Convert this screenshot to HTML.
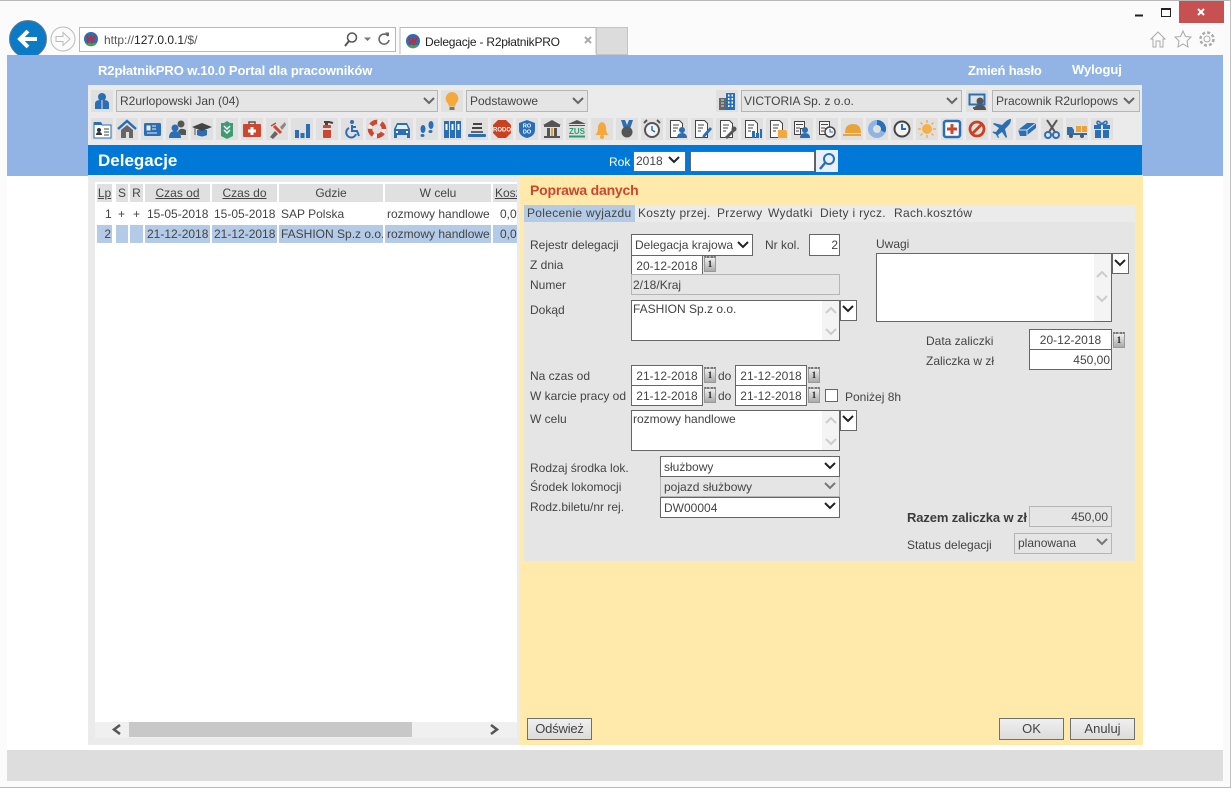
<!DOCTYPE html>
<html><head><meta charset="utf-8"><style>
html,body{margin:0;padding:0;width:1231px;height:788px;overflow:hidden;background:#fbfbfb}
body{font:12px/14px "Liberation Sans",sans-serif;letter-spacing:0;color:#444;position:relative}
div,span.a,svg.a{position:absolute;box-sizing:border-box}
.t{white-space:nowrap;line-height:14px;height:14px}
.w{color:#fff;font-weight:bold;font-size:13px;letter-spacing:-.08px}
.b{background:#fff;border:1px solid #666;padding:3px 3px 0;white-space:nowrap;line-height:15px;overflow:hidden}
.r{text-align:right;padding-right:1px}
.c{text-align:center}
.g{background:#e5e5e5;border:1px solid #b5b5b5;padding:3px 3px 0;white-space:nowrap;line-height:15px;overflow:hidden}
.h{background:#e0e0e0;top:184px;height:18px;text-align:center;line-height:18px;white-space:nowrap;overflow:hidden}
.u{text-decoration:underline}
.s{background:#b3cbe6;top:225px;height:18px;line-height:18px;white-space:nowrap;overflow:hidden}
.p{top:205px;line-height:17px;height:17px;white-space:nowrap;letter-spacing:.3px}
.bt{border:1px solid #707070;background:linear-gradient(#f0f0f0,#dcdcdc);text-align:center;top:718px;height:22px;line-height:20px;font-family:"Liberation Sans",sans-serif;font-size:13px;letter-spacing:0;color:#444}
.cal{width:12px;height:16px;background:linear-gradient(#eee,#aaa);border:1px solid #999;border-top:2px dotted #777;font:bold 9px/12px "Liberation Serif",serif;text-align:center;color:#222}
.sb{background:#f4f4f4;width:17px}
</style></head><body>
<!-- window frame -->
<div style="left:0;top:0;width:1231px;height:1px;background:#b8b8b8"></div>
<div style="left:1230px;top:0;width:1px;height:788px;background:#c0c0c0"></div>
<div style="left:0;top:787px;width:1231px;height:1px;background:#b8b8b8"></div>
<div style="left:1179px;top:1px;width:45px;height:22px;background:#c75050"></div>
<svg class="a" style="left:0;top:0" width="1231" height="55">
<path d="M1135 14.5h8v2h-8z" fill="#222"/>
<rect x="1161.5" y="8.5" width="9" height="8" fill="none" stroke="#222"/><rect x="1161" y="8" width="10" height="2" fill="#222"/>
<path d="M1198 9l6 6M1204 9l-6 6" stroke="#fff" stroke-width="2"/>
<circle cx="28" cy="39" r="18.500" fill="#0a7bc4" stroke="#6a7a88"/>
<path d="M37 39H21M28 31l-8 8 8 8" fill="none" stroke="#fff" stroke-width="4"/>
<circle cx="63" cy="39" r="12" fill="#fbfbfb" stroke="#bbb"/>
<path d="M56 36.500h7v-4l7 6.500-7 6.500v-4h-7z" fill="none" stroke="#bbb"/>
<rect x="79.500" y="27.500" width="316" height="24" fill="#fff" stroke="#b8b8b8"/>
<circle cx="91" cy="39" r="7" fill="#2a6fb5"/><path d="M85 43a7 7 0 0 0 12 0z" fill="#4aa04a"/><path d="M87 35l1 7 3-6 1 6 3-7" fill="none" stroke="#d22" stroke-width="1.600"/>
<circle cx="352" cy="37.500" r="4.500" fill="none" stroke="#555" stroke-width="1.500"/><path d="M349 41l-4 5" stroke="#555" stroke-width="2"/>
<path d="M364 37.500h7l-3.500 3.500z" fill="#777"/>
<path d="M388 36a5 5 0 1 0 1 4" fill="none" stroke="#666" stroke-width="1.600"/><path d="M385 32.500l4 0v4z" fill="#666"/>
<path d="M400 54V27.500h196V54" fill="#fff" stroke="#b8b8b8"/>
<rect x="596.500" y="27.500" width="31" height="27" fill="#dcdcdc" stroke="#c4c4c4"/>
<circle cx="413" cy="41" r="7" fill="#2a6fb5"/><path d="M407 45a7 7 0 0 0 12 0z" fill="#4aa04a"/><path d="M409 37l1 7 3-6 1 6 3-7" fill="none" stroke="#d22" stroke-width="1.600"/>
<path d="M585 37l6 6M591 37l-6 6" stroke="#aaa" stroke-width="2"/>
<path d="M1151 39l7-7 7 7h-2v8h-3v-6h-4v6h-3v-8z" fill="none" stroke="#aaa"/>
<path d="M1183 31l2.500 5.500 5.500.5-4 4 1 6-5-3-5 3 1-6-4-4 5.500-.5z" fill="none" stroke="#aaa"/>
<circle cx="1207" cy="39" r="3" fill="none" stroke="#aaa"/><circle cx="1207" cy="39" r="6.500" fill="none" stroke="#aaa" stroke-width="2.500" stroke-dasharray="3 2.100"/>
</svg>
<div class="t" style="left:104px;top:33px;color:#555">http://<span style="color:#222">127.0.0.1</span>/$/</div>
<div class="t" style="left:425px;top:35px;color:#222;letter-spacing:-.22px">Delegacje - R2płatnikPRO</div>

<!-- page -->
<div style="left:7px;top:55px;width:1216px;height:726px;background:#fff"></div>
<div style="left:7px;top:55px;width:1216px;height:121px;background:#92b4e5"></div>
<div style="left:7px;top:750px;width:1216px;height:31px;background:#dddddd"></div>
<div style="left:88px;top:175px;width:432px;height:570px;background:#ebebeb"></div>
<div style="left:520px;top:175px;width:623px;height:570px;background:#ffe9ab"></div>
<div class="t w" style="left:98px;top:64px">R2płatnikPRO w.10.0 Portal dla pracowników</div>
<div class="t w" style="left:968px;top:64px;letter-spacing:-.2px">Zmień hasło</div>
<div class="t w" style="left:1072px;top:63px">Wyloguj</div>
<div style="left:88px;top:85px;width:1054px;height:60px;background:#ebebeb"></div>
<div style="left:88px;top:145px;width:1054px;height:30px;background:#0078d7"></div>
<div class="t w" style="left:98px;top:152px;font-size:17px;height:18px;line-height:18px;letter-spacing:0">Delegacje</div>

<div class="g" style="left:116px;top:90px;width:322px;height:22px">R2urlopowski Jan (04)</div>
<div class="g" style="left:466px;top:90px;width:122px;height:22px">Podstawowe</div>
<div class="g" style="left:741px;top:90px;width:221px;height:22px;padding-left:2px">VICTORIA Sp. z o.o.</div>
<div class="g" style="left:992px;top:90px;width:148px;height:22px"><span style="display:block;width:122px;overflow:hidden">Pracownik R2urlopowski</span></div>

<svg class="a" style="left:0;top:85px" width="1231" height="60">
<defs><path id="ch" d="M0 0l5 5 5-5" fill="none" stroke-width="2"/></defs>
<use href="#ch" x="424" y="13" stroke="#666"/><use href="#ch" x="573" y="13" stroke="#666"/><use href="#ch" x="947" y="13" stroke="#666"/><use href="#ch" x="1124" y="13" stroke="#666"/>
<g transform="translate(91,5)"><rect width="22" height="22" fill="#e0e0e0"/><circle cx="11" cy="7" r="4" fill="#2a6fb5"/><path d="M4 19v-5q0-4 5-4h4q5 0 5 4v5z" fill="#2a6fb5"/><path d="M11 10v9" stroke="#e0e0e0"/></g>
<g transform="translate(441,5)"><rect width="22" height="22" fill="#e0e0e0"/><path d="M11 2a6.500 6.500 0 0 0-4 11.500l1 3h6l1-3A6.500 6.500 0 0 0 11 2z" fill="#f3a93c"/><rect x="8.500" y="17" width="5" height="3" fill="#777"/></g>
<g transform="translate(716,5)"><rect width="22" height="22" fill="#e0e0e0"/><rect x="3" y="8" width="7" height="12" fill="#666"/><rect x="10" y="3" width="9" height="17" fill="#2a6fb5"/><path d="M5 10h3M5 13h3M5 16h3" stroke="#ddd"/><path d="M12 5.500h1.500M15.500 5.500H17M12 9h1.500M15.500 9H17M12 12.500h1.500M15.500 12.500H17M12 16h1.500M15.500 16H17" stroke="#fff" stroke-width="2"/></g>
<g transform="translate(966,5)"><rect width="22" height="22" fill="#e0e0e0"/><path d="M3.500 4.500h15v10h-15z" fill="none" stroke="#2a6fb5" stroke-width="2"/><path d="M7 18h8" stroke="#2a6fb5" stroke-width="2"/><circle cx="14" cy="11" r="3.500" fill="#555"/><path d="M8 20q0-5 6-5t6 5z" fill="#555"/></g>
</svg>

<svg class="a" style="left:0;top:118px" width="1231" height="23" font-family="Liberation Sans,sans-serif">
<g fill="#e0e0e0"><rect x="91" width="22" height="22"/><rect x="116" width="22" height="22"/><rect x="141" width="22" height="22"/><rect x="166" width="22" height="22"/><rect x="191" width="22" height="22"/><rect x="216" width="22" height="22"/><rect x="241" width="22" height="22"/><rect x="266" width="22" height="22"/><rect x="291" width="22" height="22"/><rect x="316" width="22" height="22"/><rect x="341" width="22" height="22"/><rect x="366" width="22" height="22"/><rect x="391" width="22" height="22"/><rect x="416" width="22" height="22"/><rect x="441" width="22" height="22"/><rect x="466" width="22" height="22"/><rect x="491" width="22" height="22"/><rect x="516" width="22" height="22"/><rect x="541" width="22" height="22"/><rect x="566" width="22" height="22"/><rect x="591" width="22" height="22"/><rect x="616" width="22" height="22"/><rect x="641" width="22" height="22"/><rect x="666" width="22" height="22"/><rect x="691" width="22" height="22"/><rect x="716" width="22" height="22"/><rect x="741" width="22" height="22"/><rect x="766" width="22" height="22"/><rect x="791" width="22" height="22"/><rect x="816" width="22" height="22"/><rect x="841" width="22" height="22"/><rect x="866" width="22" height="22"/><rect x="891" width="22" height="22"/><rect x="916" width="22" height="22"/><rect x="941" width="22" height="22"/><rect x="966" width="22" height="22"/><rect x="991" width="22" height="22"/><rect x="1016" width="22" height="22"/><rect x="1041" width="22" height="22"/><rect x="1066" width="22" height="22"/><rect x="1091" width="22" height="22"/></g>
<!-- id card -->
<g transform="translate(91,0)"><path d="M3 5h7l1 2h9v13H3z" fill="#fff" stroke="#2a6fb5"/><path d="M3 4h7l1 3H3z" fill="#2a6fb5"/><circle cx="8" cy="12" r="2" fill="#333"/><path d="M5 17q0-3 3-3t3 3z" fill="#333"/><path d="M13 11h5M13 14h5M13 17h5" stroke="#444"/></g>
<!-- home -->
<g transform="translate(116,0)"><path d="M2 11L11 3l9 8" fill="none" stroke="#2a6fb5" stroke-width="2.500"/><path d="M5 12l6-5 6 5v8H5z" fill="#666"/><rect x="10" y="14" width="3" height="6" fill="#e0e0e0"/></g>
<!-- card -->
<g transform="translate(141,0)"><rect x="3" y="5" width="17" height="13" rx="1.500" fill="#2a6fb5"/><path d="M6 8h3v4H6zM11 8h4M11 11h4M6 15h10" fill="#e8eef6" stroke="#e8eef6"/></g>
<!-- people -->
<g transform="translate(166,0)"><circle cx="15" cy="6" r="3.500" fill="#555"/><path d="M12 13q3-4 8-1v5h-5z" fill="#555"/><circle cx="9" cy="10" r="3.500" fill="#2a6fb5"/><path d="M3 20q0-7 6-7t6 7z" fill="#2a6fb5"/></g>
<!-- grad cap -->
<g transform="translate(191,0)"><path d="M6 12v5q5 3 10 0v-5z" fill="#2a6fb5"/><path d="M1 9l10-4 10 4-10 4z" fill="#444"/><path d="M4 10v7" stroke="#555"/></g>
<!-- shield green -->
<g transform="translate(216,0)"><path d="M5 5h3l3-2 3 2h3v13l-6 3-6-3z" fill="#3e9c72"/><path d="M8 8l3 3 3-3M8 12l3 3 3-3" fill="none" stroke="#fff" stroke-width="1.500"/></g>
<!-- medkit -->
<g transform="translate(241,0)"><path d="M8 6V4h6v2" fill="none" stroke="#555" stroke-width="1.500"/><rect x="2" y="6" width="18" height="13" rx="1" fill="#cc4630"/><path d="M9.500 9h3v2.500H15v3h-2.500V17h-3v-2.500H7v-3h2.500z" fill="#fff"/></g>
<!-- tool -->
<g transform="translate(266,0)"><path d="M4 19l5-6 3 3-5 5z" fill="#666"/><path d="M14 9l5-5 1 3-4 5z" fill="#888"/><path d="M8 8l7 7" stroke="#cc4630" stroke-width="3"/><path d="M5 8l5-3" stroke="#cc4630" stroke-width="1.500"/></g>
<!-- chart -->
<g transform="translate(291,0)"><path d="M4 12h4v8H4zM9.500 15h4v5h-4zM15 6h4v14h-4z" fill="#2a6fb5"/></g>
<!-- extinguisher -->
<g transform="translate(316,0)"><rect x="7" y="7" width="8" height="13" rx="1" fill="#cc4630"/><path d="M8 4h5l4 1" fill="none" stroke="#444" stroke-width="2"/><rect x="9" y="4" width="3" height="3" fill="#444"/><rect x="7" y="10" width="8" height="2" fill="#ddd"/></g>
<!-- wheelchair -->
<g transform="translate(341,0)"><circle cx="11" cy="4" r="2" fill="#2a6fb5"/><path d="M11 7v6h5l2 5M11 9h4" fill="none" stroke="#2a6fb5" stroke-width="2"/><path d="M8 10a5 5 0 1 0 7 6" fill="none" stroke="#2a6fb5" stroke-width="2"/></g>
<!-- lifebuoy -->
<g transform="translate(366,0)"><circle cx="11" cy="11" r="7" fill="none" stroke="#cc4630" stroke-width="4.500"/><circle cx="11" cy="11" r="7" fill="none" stroke="#eee" stroke-width="4.500" stroke-dasharray="4 7"/></g>
<!-- car -->
<g transform="translate(391,0)"><path d="M3 17v-6l3-6h10l3 6v6z" fill="#2a6fb5"/><path d="M6.500 7h9l1.500 4H5z" fill="#e8eef6"/><rect x="3" y="17" width="3" height="3" fill="#2a6fb5"/><rect x="16" y="17" width="3" height="3" fill="#2a6fb5"/><path d="M5 14h2M15 14h2" stroke="#fff" stroke-width="2"/></g>
<!-- footprints -->
<g transform="translate(416,0)"><ellipse cx="7" cy="11" rx="2.500" ry="4" fill="#2a6fb5"/><ellipse cx="6.500" cy="17.500" rx="2" ry="1.500" fill="#2a6fb5"/><ellipse cx="15" cy="7" rx="2.500" ry="4" fill="#2a6fb5"/><ellipse cx="14.500" cy="13.500" rx="2" ry="1.500" fill="#2a6fb5"/></g>
<!-- binders -->
<g transform="translate(441,0)"><path d="M3 3h5v17H3zM9 3h5v17H9zM15 3h5v17h-5z" fill="#2a6fb5"/><path d="M5.500 6v6M11.500 6v6M17.500 6v6" stroke="#fff" stroke-width="2"/></g>
<!-- stack -->
<g transform="translate(466,0)"><path d="M7 6h9M6 10h10" stroke="#444" stroke-width="2"/><path d="M5 14h12" stroke="#666" stroke-width="2"/><rect x="2" y="16" width="18" height="3" rx="1" fill="#2a6fb5"/></g>
<!-- stop rodo -->
<g transform="translate(491,0)"><path d="M7 2h8l5 5v8l-5 5H7l-5-5V7z" fill="#cc4020"/><text x="11" y="13.500" font-size="6" font-weight="bold" fill="#fff" text-anchor="middle">RODO</text></g>
<!-- shield rodo -->
<g transform="translate(516,0)"><path d="M11 2l8 3v7q0 6-8 8-8-2-8-8V5z" fill="#2a6fb5"/><text x="11" y="9.500" font-size="5.500" font-weight="bold" fill="#fff" text-anchor="middle">RO</text><text x="11" y="15.500" font-size="5.500" font-weight="bold" fill="#fff" text-anchor="middle">DO</text></g>
<!-- bank -->
<g transform="translate(541,0)"><path d="M11 2l9 5H2z" fill="#555"/><path d="M3 8h16M3 19h16" stroke="#555" stroke-width="2"/><path d="M6 10h3v8H6z" fill="#555"/><path d="M13 10h3v8h-3z" fill="#555"/><path d="M10 10h2v8h-2z" fill="#e3a33c"/></g>
<!-- zus -->
<g transform="translate(566,0)"><path d="M11 2l9 4H2z" fill="#555"/><path d="M3 7.500h16" stroke="#555"/><text x="11" y="16" font-size="8" font-weight="bold" fill="#2e9c72" text-anchor="middle">ZUS</text><path d="M3 18.500h16" stroke="#2e9c72" stroke-width="2"/></g>
<!-- bell -->
<g transform="translate(591,0)"><path d="M4 17q3-2 3-7t4-6q4 1 4 6t3 7z" fill="#f3a93c"/><circle cx="11" cy="19" r="2" fill="#f3a93c"/></g>
<!-- medal -->
<g transform="translate(616,0)"><path d="M5 2h4l2 5 2-5h4l-3 9H8z" fill="#2a6fb5"/><circle cx="11" cy="14" r="5.500" fill="#555"/></g>
<!-- alarm -->
<g transform="translate(641,0)"><circle cx="11" cy="12" r="7" fill="#f4f4f4" stroke="#555" stroke-width="2"/><path d="M11 8v4l3 2" fill="none" stroke="#2a6fb5" stroke-width="1.500"/><path d="M3 5l3-3M19 5l-3-3" stroke="#555" stroke-width="2"/></g>
<!-- docs -->
<g fill="#fbfbfb" stroke="#444"><path d="M4.500 2.500h9l3 3v14h-12z" transform="translate(666,0)"/><path d="M4.500 2.500h9l3 3v14h-12z" transform="translate(691,0)"/><path d="M4.500 2.500h9l3 3v14h-12z" transform="translate(716,0)"/><path d="M4.500 2.500h9l3 3v14h-12z" transform="translate(741,0)"/><path d="M4.500 2.500h9l3 3v14h-12z" transform="translate(766,0)"/></g>
<g stroke="#444"><path d="M673 7h6M673 10h5M673 13h3M698 7h6M698 10h5M698 13h3M723 7h6M723 10h5M723 13h3M748 7h6M748 10h5M748 13h3M773 7h6M773 10h5M773 13h3"/></g>
<circle cx="682" cy="12" r="3" fill="#2a6fb5"/><path d="M677 20q0-5 5-5t5 5z" fill="#2a6fb5"/>
<path d="M703 17l7-8 2 2-7 8-3 1z" fill="#2a6fb5"/>
<path d="M725 19l8-8 2 2-8 8z" fill="#555"/><circle cx="734" cy="11" r="2.500" fill="#555"/>
<path d="M752 13h3v7h-3zM756 15h3v5h-3zM760 11h2v9h-2z" fill="#2a6fb5"/>
<path d="M778 12h8l1 2v6h-9z" fill="#f3a93c"/>
<!-- db person -->
<g transform="translate(791,0)"><path d="M3.500 3.500h10v7h-4v6h-6z" fill="#f4f4f4" stroke="#444"/><path d="M5 6.500h7M5 10h4M5 13h3" stroke="#444"/><circle cx="14" cy="12" r="3" fill="#2a6fb5"/><path d="M9 20q0-5 5-5t5 5z" fill="#2a6fb5"/></g>
<!-- db clock -->
<g transform="translate(816,0)"><path d="M3.500 3.500h10v7h-4v6h-6z" fill="#f4f4f4" stroke="#444"/><path d="M5 6.500h7M5 10h4M5 13h3" stroke="#444"/><circle cx="14" cy="14" r="5" fill="#f4f4f4" stroke="#444" stroke-width="1.500"/><path d="M14 11v3h3" fill="none" stroke="#2a6fb5"/></g>
<!-- helmet -->
<g transform="translate(841,0)"><path d="M4 15q0-9 8-9t8 9z" fill="#e8a33c"/><path d="M2 16h18v2H2z" fill="#e8a33c"/></g>
<!-- donut -->
<g transform="translate(866,0)"><circle cx="11" cy="11" r="6.500" fill="none" stroke="#8db4e2" stroke-width="5"/><path d="M11 4.500a6.500 6.500 0 0 1 6 9" fill="none" stroke="#2a6fb5" stroke-width="5"/></g>
<!-- clock -->
<g transform="translate(891,0)"><circle cx="11" cy="11" r="7.500" fill="#f4f4f4" stroke="#444" stroke-width="2"/><path d="M11 6v5h4" fill="none" stroke="#2a6fb5" stroke-width="2"/></g>
<!-- sun -->
<g transform="translate(916,0)"><circle cx="11" cy="11" r="5" fill="#f3b04c"/><path d="M11 2v3M11 17v3M2 11h3M17 11h3M4.500 4.500l2 2M15.500 15.500l2 2M4.500 17.500l2-2M15.500 6.500l2-2" stroke="#f3b04c" stroke-width="1.500"/></g>
<!-- plus -->
<g transform="translate(941,0)"><rect x="3" y="3" width="16" height="16" rx="2" fill="#fff" stroke="#2a6fb5" stroke-width="2.500"/><path d="M9.500 6h3v3.500H16v3h-3.500V16h-3v-3.500H6v-3h3.500z" fill="#cc4630"/></g>
<!-- no -->
<g transform="translate(966,0)"><circle cx="11" cy="11" r="7" fill="none" stroke="#cc4020" stroke-width="2.800"/><path d="M6 16L16 6" stroke="#cc4020" stroke-width="2.800"/></g>
<!-- plane -->
<g transform="translate(991,0)"><path d="M20 2q-3 0-6 3L11 8 3 6 2 7l6 4-3 4-3-.5-.5 1 3.500 2 2 3.500 1-.5L7 18l4-3 4 6 1-1-2-8 3-3q3-3 3-7z" fill="#2a6fb5" transform="translate(0,-1)"/></g>
<!-- eraser -->
<g transform="translate(1016,0)"><path d="M2 12l9-7h9v5l-10 8H4z" fill="#2a6fb5"/><path d="M2 12h9l9-7M11 12v6" fill="none" stroke="#e0e0e0"/></g>
<!-- scissors -->
<g transform="translate(1041,0)"><path d="M6 2l8 12M16 2L8 14" stroke="#555" stroke-width="2"/><circle cx="7" cy="17" r="3" fill="none" stroke="#2a6fb5" stroke-width="2"/><circle cx="15" cy="17" r="3" fill="none" stroke="#2a6fb5" stroke-width="2"/></g>
<!-- truck -->
<g transform="translate(1066,0)"><path d="M1 9h5l2 3v5H1z" fill="#2a6fb5"/><path d="M8 15h13v2H8z" fill="#2a6fb5"/><rect x="10" y="8" width="5" height="6" fill="#e8a33c"/><rect x="16" y="8" width="5" height="6" fill="#e8a33c"/><circle cx="5" cy="18" r="2" fill="#555"/><circle cx="16" cy="18" r="2" fill="#555"/></g>
<!-- gift -->
<g transform="translate(1091,0)"><path d="M3 7h7v4H3zM12 7h7v4h-7zM4 12h6v8H4zM12 12h6v8h-6z" fill="#2a6fb5"/><path d="M11 6Q6 1 6 5q0 2 5 1 5 1 5-1 0-4-5 1" fill="none" stroke="#2a6fb5" stroke-width="1.500"/></g>
</svg>

<!-- blue bar -->
<div class="t" style="left:609px;top:155px;color:#fff">Rok</div>
<div class="b" style="left:633px;top:151px;width:53px;height:21px;padding:2px 2px;border-color:#666">2018</div>
<div class="b" style="left:690px;top:151px;width:125px;height:21px"></div>
<div style="left:816px;top:150px;width:22px;height:22px;background:#eaf0f8"></div>

<!-- table -->
<div style="left:95px;top:182px;width:422px;height:556px;background:#fff"></div>
<div class="h u" style="left:97px;width:15px">Lp</div>
<div class="h" style="left:116px;width:12px">S</div>
<div class="h" style="left:130px;width:13px">R</div>
<div class="h u" style="left:145px;width:65px">Czas od</div>
<div class="h u" style="left:212px;width:65px">Czas do</div>
<div class="h" style="left:279px;width:104px">Gdzie</div>
<div class="h" style="left:385px;width:106px">W celu</div>
<div class="h u" style="left:493px;width:24px;text-align:left;padding-left:2px">Kosz</div>
<div class="t" style="left:105px;top:207px">1</div>
<div class="t" style="left:118px;top:207px">+</div>
<div class="t" style="left:133px;top:207px">+</div>
<div class="t" style="left:147px;top:207px">15-05-2018</div>
<div class="t" style="left:214px;top:207px">15-05-2018</div>
<div class="t" style="left:281px;top:207px">SAP Polska</div>
<div class="t" style="left:387px;top:207px">rozmowy handlowe</div>
<div class="t" style="left:500px;top:207px;width:17px;overflow:hidden">0,00</div>
<div class="s" style="left:97px;width:15px;text-align:right;padding-right:1px">2</div>
<div class="s" style="left:116px;width:12px"></div>
<div class="s" style="left:130px;width:13px"></div>
<div class="s" style="left:145px;width:65px;padding-left:2px">21-12-2018</div>
<div class="s" style="left:212px;width:65px;padding-left:2px">21-12-2018</div>
<div class="s" style="left:279px;width:104px;padding-left:2px">FASHION Sp.z o.o.</div>
<div class="s" style="left:385px;width:106px;padding-left:2px">rozmowy handlowe</div>
<div class="s" style="left:493px;width:24px;padding-left:7px">0,00</div>
<div style="left:95px;top:722px;width:422px;height:16px;background:#f0f0f0"></div>
<div style="left:129px;top:722px;width:283px;height:15px;background:#c8c8c8"></div>

<!-- right panel -->
<div class="t" style="left:530px;top:183px;color:#d0452a;font-weight:bold;font-size:14px;letter-spacing:-.2px">Poprawa danych</div>
<div style="left:524px;top:205px;width:611px;height:356px;background:#e5e5e5"></div>
<div style="left:524px;top:205px;width:611px;height:17px;background:#ebebeb"></div>
<div style="left:524px;top:205px;width:111px;height:17px;background:#b3cbe6"></div>
<div class="p" style="left:527px">Polecenie wyjazdu</div>
<div class="p" style="left:638px">Koszty przej.</div>
<div class="p" style="left:717px">Przerwy</div>
<div class="p" style="left:768px">Wydatki</div>
<div class="p" style="left:820px">Diety i rycz.</div>
<div class="p" style="left:894px">Rach.kosztów</div>

<div class="t" style="left:530px;top:238px">Rejestr delegacji</div>
<div class="b" style="left:631px;top:234px;width:122px;height:22px">Delegacja krajowa</div>
<div class="t" style="left:765px;top:238px">Nr kol.</div>
<div class="b r" style="left:809px;top:234px;width:31px;height:22px">2</div>
<div class="t" style="left:530px;top:258px">Z dnia</div>
<div class="b c" style="left:631px;top:255px;width:72px;height:21px;padding:3px 0 0">20-12-2018</div>
<div class="cal" style="left:704px;top:256px">1</div>
<div class="t" style="left:530px;top:278px">Numer</div>
<div class="g" style="left:631px;top:274px;width:209px;height:21px;padding:3px 1px 0">2/18/Kraj</div>
<div class="t" style="left:530px;top:303px">Dokąd</div>
<div class="b" style="left:631px;top:300px;width:209px;height:41px;padding:1px 1px 0">FASHION Sp.z o.o.</div>
<div class="b" style="left:840px;top:300px;width:17px;height:21px"></div>

<div class="t" style="left:530px;top:369px">Na czas od</div>
<div class="b c" style="left:631px;top:365px;width:72px;height:21px;padding:3px 0 0">21-12-2018</div>
<div class="cal" style="left:704px;top:367px">1</div>
<div class="t" style="left:718px;top:369px">do</div>
<div class="b c" style="left:735px;top:365px;width:72px;height:21px;padding:3px 0 0">21-12-2018</div>
<div class="cal" style="left:808px;top:367px">1</div>
<div class="t" style="left:530px;top:389px">W karcie pracy od</div>
<div class="b c" style="left:631px;top:385px;width:72px;height:21px;padding:3px 0 0">21-12-2018</div>
<div class="cal" style="left:704px;top:387px">1</div>
<div class="t" style="left:718px;top:389px">do</div>
<div class="b c" style="left:735px;top:385px;width:72px;height:21px;padding:3px 0 0">21-12-2018</div>
<div class="cal" style="left:808px;top:387px">1</div>
<div class="b" style="left:825px;top:389px;width:13px;height:13px"></div>
<div class="t" style="left:845px;top:390px">Poniżej 8h</div>
<div class="t" style="left:530px;top:412px">W celu</div>
<div class="b" style="left:631px;top:410px;width:209px;height:41px;padding:1px 1px 0">rozmowy handlowe</div>
<div class="b" style="left:840px;top:410px;width:17px;height:21px"></div>

<div class="t" style="left:530px;top:461px">Rodzaj środka lok.</div>
<div class="b" style="left:660px;top:456px;width:180px;height:21px">służbowy</div>
<div class="t" style="left:530px;top:480px">Środek lokomocji</div>
<div class="g" style="left:660px;top:477px;width:180px;height:20px;padding:3px 3px 0;border-width:0 1px 1px 1px">pojazd służbowy</div>
<div class="t" style="left:530px;top:500px">Rodz.biletu/nr rej.</div>
<div class="b" style="left:660px;top:497px;width:180px;height:21px">DW00004</div>

<div class="t" style="left:876px;top:237px">Uwagi</div>
<div class="b" style="left:876px;top:253px;width:236px;height:69px"></div>
<div class="b" style="left:1112px;top:253px;width:17px;height:21px"></div>
<div class="t" style="left:926px;top:334px">Data zaliczki</div>
<div class="b c" style="left:1029px;top:329px;width:83px;height:21px;padding:3px 0 0">20-12-2018</div>
<div class="cal" style="left:1113px;top:332px">1</div>
<div class="t" style="left:926px;top:354px">Zaliczka w zł</div>
<div class="b r" style="left:1029px;top:349px;width:83px;height:21px">450,00</div>
<div class="t" style="left:907px;top:511px;font-weight:bold;font-size:13px;letter-spacing:-.12px;color:#3c3c3c">Razem zaliczka w zł</div>
<div class="g r" style="left:1029px;top:506px;width:83px;height:21px">450,00</div>
<div class="t" style="left:907px;top:538px">Status delegacji</div>
<div class="g" style="left:1014px;top:533px;width:98px;height:21px;padding:2px 3px 0">planowana</div>
<div class="bt" style="left:527px;width:65px;letter-spacing:-.2px">Odśwież</div>
<div class="bt" style="left:999px;width:65px">OK</div>
<div class="bt" style="left:1070px;width:65px">Anuluj</div>

<div class="sb" style="left:822px;top:301px;height:39px"></div>
<div class="sb" style="left:822px;top:411px;height:39px"></div>
<div class="sb" style="left:1094px;top:254px;height:67px"></div>

<!-- overlay chevrons -->
<svg class="a" style="left:0;top:0" width="1231" height="788">
<g fill="none" stroke="#222" stroke-width="2">
<path d="M738 242l5 5 5-5M669 157l5 5 5-5M843 306l5 5 5-5M843 416l5 5 5-5M1115 260l5 5 5-5M825 463l5 5 5-5M825 503l5 5 5-5"/>
</g>
<g fill="none" stroke="#777" stroke-width="2">
<path d="M825 483l5 5 5-5M1097 539l5 5 5-5"/>
</g>
<g fill="none" stroke="#ccc" stroke-width="2">
<path d="M826 313l5-5 5 5M826 329l5 5 5-5M826 423l5-5 5 5M826 439l5 5 5-5M1097 277l5-5 5 5M1097 296l5 5 5-5"/>
</g>
<g fill="none" stroke="#555" stroke-width="2.500">
<path d="M120 725l-6 4.500 6 4.500M491 725l6 4.500-6 4.500"/>
</g>
<circle cx="829" cy="159" r="5" fill="none" stroke="#2a6fb5" stroke-width="2"/><path d="M825 163l-5 6" stroke="#2a6fb5" stroke-width="2.500"/>
</svg>
</body></html>
